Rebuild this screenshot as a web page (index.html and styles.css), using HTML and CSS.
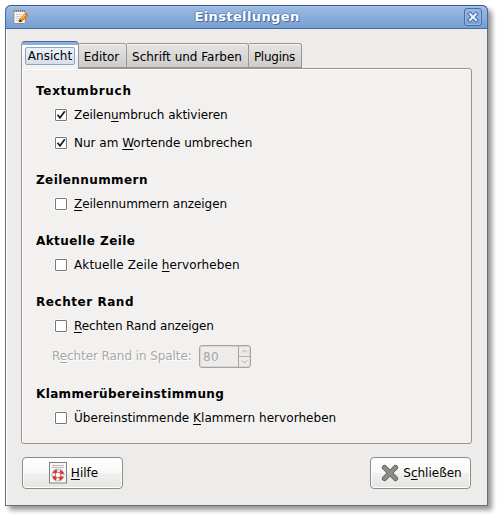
FILE: index.html
```html
<!DOCTYPE html>
<html lang="de">
<head>
<meta charset="utf-8">
<title>Einstellungen</title>
<link rel="stylesheet" href="styles.css">
</head>
<body>
<main class="window">
  <header class="titlebar">
    <svg class="app-icon" width="16" height="16" viewBox="0 0 16 16">
      <rect x=".8" y="2" width="11.5" height="12.5" rx="1" fill="#f5f5ef" stroke="#8c8d86"/>
      <path d="M1.5 1v2M3.5 1v2M5.5 1v2M7.5 1v2M9.5 1v2M11.5 1v2" stroke="#77796f" stroke-width=".9"/>
      <path d="M3 5.5h8M3 7.5h7M3 9.5h4M3 11.5h3" stroke="#c8c9c2" stroke-width=".8"/>
      <path d="M6 13l1-3 5.5-5.5 2.3 2.3L9 12.2z" fill="#f58b0b" stroke="#b75a00" stroke-width=".5"/>
      <path d="M8 10l5-5" stroke="#ffd34a"/>
      <path d="M12 5l1.2-1.2 2.2 2.2-1.2 1.2z" fill="#e06b43"/>
      <path d="M6 13l.8-2.7L9 12.2z" fill="#20242a"/>
    </svg>
    <h1 class="title">Einstellungen</h1>
    <button class="close" aria-label="Schließen">
      <svg width="12" height="12" viewBox="0 0 12 12"><path d="M3 3l6 6M9 3l-6 6" stroke="#416ba4" stroke-width="4" stroke-linecap="square"/><path d="M3 3l6 6M9 3l-6 6" stroke="#f2f6fc" stroke-width="2" stroke-linecap="square"/></svg>
    </button>
  </header>
  <nav class="tabs">
    <div class="tab active"><span class="focus">Ansicht</span></div>
    <div class="tab editor">Editor</div>
    <div class="tab fonts">Schrift und Farben</div>
    <div class="tab plugins">Plugins</div>
  </nav>
  <section class="panel">
    <h2 class="first wrap-title">Textumbruch</h2>
    <label class="row"><span class="box"><svg class="tick" width="10" height="10" viewBox="0 0 10 10"><path d="M1.5 4.7L4 7.8 8.8 1.2" /></svg></span><span class="text wrap-text">Zeilen<u>u</u>mbruch aktivieren</span></label>
    <label class="row"><span class="box"><svg class="tick" width="10" height="10" viewBox="0 0 10 10"><path d="M1.5 4.7L4 7.8 8.8 1.2" /></svg></span><span class="text">Nur am <u>W</u>ortende umbrechen</span></label>
    <h2>Zeilennummern</h2>
    <label class="row"><span class="box"></span><span class="text wrap-text"><u>Z</u>eilennummern anzeigen</span></label>
    <h2>Aktuelle Zeile</h2>
    <label class="row"><span class="box"></span><span class="text line-text">Aktuelle Zeile <u>h</u>ervorheben</span></label>
    <h2 class="margin-title">Rechter Rand</h2>
    <label class="row"><span class="box"></span><span class="text margin-text"><u>R</u>echten Rand anzeigen</span></label>
    <div class="margin-row">
      <span class="margin-label">R<u>e</u>chter Rand in Spalte:</span>
      <span class="spin"><span class="value">80</span><span class="arrows">
        <svg width="11" height="10" viewBox="0 0 11 10"><path d="M3 6.5l2.5-2.5L8 6.5"/></svg>
        <svg width="11" height="10" viewBox="0 0 11 10"><path d="M3 3.5L5.5 6 8 3.5"/></svg>
      </span></span>
    </div>
    <h2 class="last">Klammerübereinstimmung</h2>
    <label class="row"><span class="box"></span><span class="text bracket-text">Übereinstimmende <u>K</u>lammern hervorheben</span></label>
  </section>
  <footer class="actions">
    <button class="button help">
      <svg width="18" height="22" viewBox="0 0 18 22">
        <rect x=".5" y=".5" width="17" height="20.5" fill="#f7f7f5" stroke="#81827c"/>
        <path d="M3 3.5h12M3 5.5h12" stroke="#b9bab5"/>
        <circle cx="9" cy="13" r="4.4" stroke="#888" stroke-width="3.9"/>
        <circle cx="9" cy="13" r="4.4" stroke="#f2f2f0" stroke-width="2.9"/>
        <circle cx="9" cy="13" r="4.4" stroke="#e03232" stroke-width="3" stroke-dasharray="3.8 3.11" stroke-dashoffset="5.36"/>
        <circle cx="9" cy="13" r="2.7" fill="#fff" stroke="#b85a5a" stroke-width=".7"/>
      </svg>
      <span><u>H</u>ilfe</span>
    </button>
    <button class="button dismiss">
      <svg width="18" height="18" viewBox="0 0 18 18"><path d="M3.5 3.5l11 11M14.5 3.5l-11 11" stroke="#60625e" stroke-width="5.2" stroke-linecap="round"/><path d="M3.5 3.5l11 11M14.5 3.5l-11 11" stroke="#8b8d88" stroke-width="3.5" stroke-linecap="round"/></svg>
      <span>S<u>c</u>hließen</span>
    </button>
  </footer>
</main>
</body>
</html>
```

FILE: styles.css
```css
* { box-sizing: border-box; }
body {
  margin: 0;
  width: 497px;
  height: 515px;
  padding: 5px;
  overflow: hidden;
  background: #fff;
  color: #000;
  font: 12px/16px "DejaVu Sans", sans-serif;
}
svg { display: block; flex: none; fill: none; }
u { text-decoration: underline; text-decoration-thickness: 1px; text-underline-offset: 2px; }
button { font: inherit; color: inherit; margin: 0; }
.window {
  width: 483px;
  height: 501px;
  border: 1px solid #6d6d6b;
  border-top: 0;
  border-radius: 6px 6px 0 0;
  background: #edeceb;
  box-shadow: inset 1px 0 #fff, 4px 4px 5px rgba(0, 0, 0, .42);
}
.titlebar {
  height: 24px;
  margin: 0 -1px;
  padding: 0 5px 0 7px;
  display: flex;
  align-items: center;
  border: 1px solid #456b9f;
  border-top-color: #34557f;
  border-radius: 6px 6px 0 0;
  background: linear-gradient(#9dbbe5, #779fd1);
  box-shadow: inset 0 1px #b0c8ea;
}
.title {
  flex: 1;
  margin: 0;
  padding-left: 1px;
  text-align: center;
  color: #fff;
  font-size: 13px;
  line-height: 18px;
  letter-spacing: .38px;
  text-shadow: 1px 1px #4169a0, -1px 0 #5b83b9, 0 -1px #6b92c6;
}
.close {
  width: 18px;
  height: 18px;
  padding: 0;
  display: grid;
  place-items: center;
  border: 1px solid #456fa8;
  border-radius: 3px;
  background: linear-gradient(#9ab9e3, #7ba2d3);
  box-shadow: inset 0 0 0 1px #98b6df;
}
.tabs { height: 39px; padding: 12px 0 0 15px; display: flex; align-items: flex-end; }
.tab {
  height: 25px;
  padding-top: 1px;
  border: 1px solid #979694;
  border-left: 0;
  border-radius: 0 3px 0 0;
  background: linear-gradient(#e6e5e4, #cdcccb);
  box-shadow: inset 0 1px #f5f4f3;
  text-align: center;
  line-height: 25px;
  white-space: nowrap;
}
.tab.active {
  width: 58px;
  height: 28px;
  margin-bottom: -1px;
  padding: 2px 3px 0;
  border-left: 1px solid #979694;
  border-top-color: #456b9f;
  border-bottom: 0;
  border-radius: 4px 4px 0 0;
  background: linear-gradient(#8daedb 3px, #fff 3px, #f2f1f0 20px);
  box-shadow: none;
  position: relative;
}
.focus {
  display: block;
  width: 50px;
  height: 18px;
  margin-top: 3px;
  border: 1px solid #8ba6cc;
  border-radius: 2px;
  background: linear-gradient(#edf1f8, #d7dfec);
  line-height: 17px;
}
.editor { width: 48px; padding-right: 2px; }
.fonts { width: 122px; padding-right: 1px; }
.plugins { width: 53px; padding-right: 1px; letter-spacing: -.25px; }
.panel {
  width: 451px;
  height: 376px;
  margin-left: 15px;
  padding: 11px 14px 0;
  border: 1px solid #979694;
  border-radius: 0 3px 3px 3px;
  background: #f2f1f0;
  box-shadow: inset 1px 1px #fff;
}
h2 { height: 20px; margin: 13px 0 0; font-size: 12px; line-height: 20px; letter-spacing: .42px; }
h2.first { height: 21px; margin: 0; line-height: 22px; }
h2.last { margin-top: 12px; letter-spacing: .36px; }
.wrap-title { letter-spacing: .7px; }
.margin-title { letter-spacing: .55px; }
.wrap-text { letter-spacing: -.04px; }
.line-text { letter-spacing: .11px; }
.margin-text { letter-spacing: -.1px; }
.bracket-text { letter-spacing: .05px; }
.row { height: 28px; padding-left: 19px; display: flex; align-items: center; }
.box {
  width: 12px;
  height: 12px;
  margin-right: 7px;
  border: 1px solid #777773;
  border-radius: 1px;
  background: #fff;
  box-shadow: 0 0 0 1px #fafaf9;
}
.tick { stroke: #1d2025; stroke-width: 1.8; }
.margin-row { height: 32px; padding-left: 16px; display: flex; align-items: center; color: #a9a8a6; text-shadow: 1px 1px #fff; }
.margin-label { width: 147px; white-space: nowrap; letter-spacing: -.08px; }
.spin { width: 52px; height: 23px; display: flex; border: 1px solid #a5a4a2; border-radius: 3px; background: #edeceb; box-shadow: inset 0 0 0 1px #d8d7d5; text-shadow: none; }
.value { width: 39px; padding-left: 3px; line-height: 22px; letter-spacing: .3px; }
.arrows { width: 12px; border-left: 1px solid #a5a4a2; }
.arrows svg { stroke: #a5a4a2; }
.arrows svg:first-child { border-bottom: 1px solid #b2b1af; height: 11px; }
.actions { padding: 13px 16px 0; display: flex; justify-content: space-between; }
.button {
  width: 101px;
  height: 32px;
  padding: 0;
  display: flex;
  align-items: center;
  justify-content: center;
  gap: 4px;
  border: 1px solid #8d8c8a;
  border-radius: 4px;
  background: linear-gradient(#fff, #f8f8f7 50%, #f0f0ef 51%, #e6e5e4);
  box-shadow: inset 0 0 0 1px #fff;
}
.help { padding-left: 2px; }
.dismiss { padding-left: 2px; }
```
